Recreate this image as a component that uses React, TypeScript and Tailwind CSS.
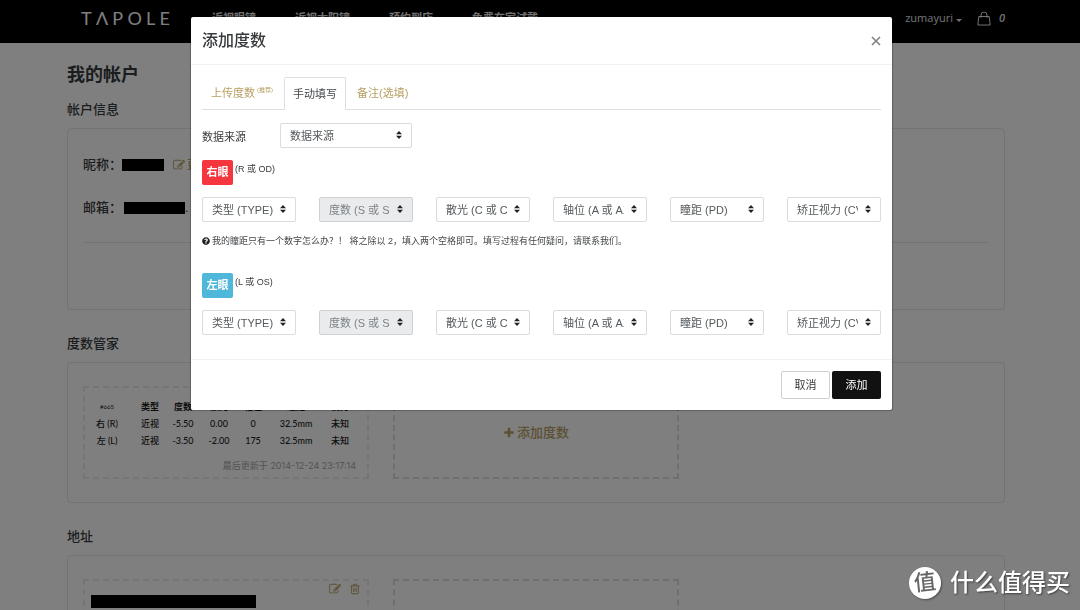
import { useState } from "react";
import type { ReactNode } from "react";
import { FaQuestionCircle } from "react-icons/fa";

const NAV_LINKS = ["近视眼镜", "近视太阳镜", "预约到店", "免费在家试戴"];

const FIELDS = [
  { name: "type", label: "类型 (TYPE)" },
  { name: "sph", label: "度数 (S 或 SPH)", disabled: true },
  { name: "cyl", label: "散光 (C 或 CYL)" },
  { name: "axis", label: "轴位 (A 或 AXIS)" },
  { name: "pd", label: "瞳距 (PD)" },
  { name: "cva", label: "矫正视力 (CVA)" },
];

const RX_HEAD = ["类型", "度数", "散光", "轴位", "瞳距", "视力"];

const RX_ROWS = [
  { eye: "右 (R)", values: ["近视", "-5.50", "0.00", "0", "32.5mm", "未知"] },
  { eye: "左 (L)", values: ["近视", "-3.50", "-2.00", "175", "32.5mm", "未知"] },
];

function EditIcon() {
  return (
    <svg viewBox="0 0 1792 1792" fill="currentColor" className="size-3" aria-hidden="true">
      <path d="M888 1184l116-116-152-152-116 116v56h96v96h56zm440-720q-16-16-33 1l-350 350q-17 17-1 33t33-1l350-350q17-17 1-33zm80 594v190q0 119-84.5 203.5t-203.5 84.5h-832q-119 0-203.5-84.5t-84.5-203.5v-832q0-119 84.5-203.5t203.5-84.5h832q63 0 117 25 15 7 18 23 3 17-9 29l-49 49q-14 14-32 8-23-6-45-6h-832q-66 0-113 47t-47 113v832q0 66 47 113t113 47h832q66 0 113-47t47-113v-126q0-13 9-22l64-64q15-15 35-7t20 29zm-96-738l288 288-672 672h-288v-288zm444 132l-92 92-288-288 92-92q28-28 68-28t68 28l152 152q28 28 28 68t-28 68z" />
    </svg>
  );
}

function TrashIcon() {
  return (
    <svg viewBox="0 0 1792 1792" fill="currentColor" className="size-3" aria-hidden="true">
      <path d="M704 736v576q0 14-9 23t-23 9h-64q-14 0-23-9t-9-23v-576q0-14 9-23t23-9h64q14 0 23 9t9 23zm256 0v576q0 14-9 23t-23 9h-64q-14 0-23-9t-9-23v-576q0-14 9-23t23-9h64q14 0 23 9t9 23zm256 0v576q0 14-9 23t-23 9h-64q-14 0-23-9t-9-23v-576q0-14 9-23t23-9h64q14 0 23 9t9 23zm128 724v-948h-896v948q0 22 7 40.5t14.5 27 10.5 8.5h832q3 0 10.5-8.5t14.5-27 7-40.5zm-672-1076h448l-48-117q-7-9-17-11h-317q-10 2-17 11zm928 32v64q0 14-9 23t-23 9h-96v948q0 83-47 143.5t-113 60.5h-832q-66 0-113-58.5t-47-141.5v-952h-96q-14 0-23-9t-9-23v-64q0-14 9-23t23-9h309l70-167q15-37 54-63t79-26h320q40 0 79 26t54 63l70 167h309q14 0 23 9t9 23z" />
    </svg>
  );
}

function PlusIcon() {
  return (
    <svg viewBox="0 0 1792 1792" fill="currentColor" className="size-3" aria-hidden="true">
      <path d="M1600 736v192q0 40-28 68t-68 28h-416v416q0 40-28 68t-68 28h-192q-40 0-68-28t-28-68v-416h-416q-40 0-68-28t-28-68v-192q0-40 28-68t68-28h416v-416q0-40 28-68t68-28h192q40 0 68 28t28 68v416h416q40 0 68 28t28 68z" />
    </svg>
  );
}

function SiteHeader() {
  return (
    <header className="flex h-[43px] items-start bg-black pl-[81px] pr-[75px] text-[11px] text-[#e4e4e4]">
      <a
        href="#home"
        aria-label="TAPOLE"
        className="mr-[42px] mt-[6px] flex w-[89px] justify-between font-['Lato',sans-serif] text-lg leading-6 text-white"
      >
        <span>T</span>
        <span>Λ</span>
        <span>P</span>
        <span>O</span>
        <span>L</span>
        <span>E</span>
      </a>
      <nav className="mt-2 flex gap-[39px] font-semibold leading-5">
        {NAV_LINKS.map((label) => (
          <a key={label} href="#shop" className="whitespace-nowrap">
            {label}
          </a>
        ))}
      </nav>
      <div className="ml-auto mt-2 flex h-5 items-center">
        <button type="button" className="flex items-center gap-[3px] font-['Open_Sans',sans-serif]">
          zumayuri
          <svg viewBox="0 0 6 3" className="mt-1 h-[3px] w-[6px]" fill="currentColor" aria-hidden="true">
            <path d="M0 0h6L3 3z" />
          </svg>
        </button>
        <a href="#cart" className="ml-[15px] flex items-center gap-2">
          <svg
            viewBox="0 0 14 15"
            className="h-[15px] w-[14px]"
            fill="none"
            stroke="currentColor"
            aria-hidden="true"
          >
            <path d="M1.8 5.5h10.4l1 8.5H.8z" strokeLinejoin="round" />
            <path d="M4 7V4a3 3 0 0 1 6 0v3" />
          </svg>
          <span className="font-['Open_Sans',sans-serif] text-[11px] font-semibold italic">0</span>
        </a>
      </div>
    </header>
  );
}

function Section({ title, children }: { title: string; children: ReactNode }) {
  return (
    <section className="mb-6">
      <h2 className="mb-2 text-[13px] font-medium leading-5">{title}</h2>
      <div className="rounded-sm border border-[#e6e6e6] px-[15px]">{children}</div>
    </section>
  );
}

function Prescription() {
  return (
    <div className="border-2 border-dashed border-[#ebebeb] pt-[10px]">
      <table className="w-[266px] table-fixed text-center font-['Lato','Noto_Sans_CJK_SC',sans-serif] text-[9px] text-[#1c1c1c]">
        <colgroup>
          <col className="w-[44px]" />
          <col className="w-[42px]" />
          <col className="w-[24px]" />
          <col className="w-[48px]" />
          <col className="w-[20px]" />
          <col className="w-[66px]" />
          <col className="w-[22px]" />
        </colgroup>
        <thead>
          <tr className="h-[17px] whitespace-nowrap leading-4">
            <th className="text-[6px] font-normal">#665</th>
            {RX_HEAD.map((h) => (
              <th key={h} className="font-bold">
                {h}
              </th>
            ))}
          </tr>
        </thead>
        <tbody>
          {RX_ROWS.map((row) => (
            <tr key={row.eye} className="h-[17px] whitespace-nowrap font-medium leading-4">
              <td>{row.eye}</td>
              {row.values.map((v, i) => (
                <td key={i}>{v}</td>
              ))}
            </tr>
          ))}
        </tbody>
      </table>
      <p className="mb-[3px] mt-[9px] pr-[11px] text-right font-['Inter','Noto_Sans_CJK_SC',sans-serif] text-[9px] leading-4 text-[#a6a6a6]">
        最后更新于 2014-12-24 23:17:14
      </p>
    </div>
  );
}

function AccountPage() {
  return (
    <main className="pl-[67px] pr-[75px] pt-5 text-[#373a3c]">
      <h1 className="mb-[13px] text-lg font-bold leading-6">我的帐户</h1>

      <Section title="帐户信息">
        <div className="flex flex-col gap-[23px] border-b border-[#e6e6e6] pb-6 pt-[26px] text-[13px] leading-5">
          <div className="flex items-center font-medium">
            昵称：
            <span className="h-3 w-[42px] bg-black" />
            <a href="#edit" className="ml-[9px] flex items-center gap-[2px] text-[11px] text-[#b8a064]">
              <EditIcon />
              更改
            </a>
          </div>
          <div className="flex items-center font-medium">
            邮箱：
            <span className="ml-[2px] h-3 w-[61px] bg-black" />
            .
          </div>
        </div>
        <div className="h-[66px]" />
      </Section>

      <Section title="度数管家">
        <div className="grid grid-cols-3 gap-6 py-[23px]">
          <Prescription />
          <button
            type="button"
            className="flex items-center justify-center gap-[2px] border-2 border-dashed border-[#dedede] text-[13px] font-medium text-[#b8a064]"
          >
            <PlusIcon />
            添加度数
          </button>
        </div>
      </Section>

      <Section title="地址">
        <div className="grid grid-cols-3 gap-6 py-[23px]">
          <div className="h-40 border-2 border-dashed border-[#ebebeb] px-[6px] pt-[2px]">
            <div className="flex h-3 justify-end gap-2 text-[#b8a064]">
              <button type="button" aria-label="编辑地址">
                <EditIcon />
              </button>
              <button type="button" aria-label="删除地址">
                <TrashIcon />
              </button>
            </div>
            <div className="h-[13px] w-[165px] bg-black" />
          </div>
          <button
            type="button"
            aria-label="添加地址"
            className="flex items-center justify-center border-2 border-dashed border-[#dedede] text-[#b8a064]"
          >
            <PlusIcon />
          </button>
        </div>
      </Section>
    </main>
  );
}

type SelectBoxProps = { id: string; label: string; disabled?: boolean; ariaLabel?: string };

function SelectBox({ id, label, disabled, ariaLabel }: SelectBoxProps) {
  return (
    <div className="relative">
      <select
        id={id}
        aria-label={ariaLabel}
        disabled={disabled}
        className="block h-[25px] w-full appearance-none rounded-xs border border-[#d9dbdd] bg-white pl-[9px] pr-[22px] pt-[2px] text-[11px] text-[#55595c] disabled:border-[#cfd2d4] disabled:bg-[#e9ebec] disabled:text-[#7c8287] disabled:opacity-100"
      >
        <option>{label}</option>
      </select>
      <svg
        viewBox="0 0 6 8"
        className="pointer-events-none absolute right-[10px] top-2 h-2 w-[6px]"
        fill="#222"
        aria-hidden="true"
      >
        <path d="M0 3.3L3 0l3 3.3zM0 4.7h6L3 8z" />
      </svg>
    </div>
  );
}

function EyeFields({ id, name }: { id: string; name: string }) {
  return (
    <div className="mt-3 grid grid-cols-6 gap-[23px]">
      {FIELDS.map((f) => (
        <SelectBox
          key={f.name}
          id={`${id}-${f.name}`}
          label={f.label}
          disabled={f.disabled}
          ariaLabel={`${name} ${f.label}`}
        />
      ))}
    </div>
  );
}

function Tab({ active, onClick, children }: { active: boolean; onClick: () => void; children: ReactNode }) {
  return (
    <button
      type="button"
      role="tab"
      aria-selected={active}
      onClick={onClick}
      className={
        active
          ? "-mb-px flex h-[33px] items-center rounded-t-xs border border-b-0 border-[#dfdfdf] bg-white px-2 text-[#43474a]"
          : "flex h-8 items-center px-[9px] text-[#b8a064]"
      }
    >
      {children}
    </button>
  );
}

function AddPrescriptionModal() {
  const [tab, setTab] = useState("manual");

  return (
    <div className="fixed inset-0 bg-black/50 pl-[3px]">
      <div
        role="dialog"
        aria-labelledby="modal-title"
        className="mx-auto mt-[17px] max-w-[701px] rounded-xs bg-white text-[11px] text-[#373a3c] shadow-[0_0_1px_1px_rgba(0,0,0,0.25)]"
      >
        <div className="flex h-12 items-center justify-between border-b border-[#f1f1f1] px-[11px]">
          <h2 id="modal-title" className="text-base font-medium leading-6">
            添加度数
          </h2>
          <button type="button" aria-label="关闭" className="text-[#808080]">
            <svg viewBox="0 0 10 10" className="size-[10px]" stroke="currentColor" strokeWidth="1.6" aria-hidden="true">
              <path d="M1 1l8 8M9 1L1 9" />
            </svg>
          </button>
        </div>

        <div className="px-[11px] pb-6 pt-3">
          <div role="tablist" className="flex gap-[2px] border-b border-[#dfdfdf]">
            <Tab active={tab === "upload"} onClick={() => setTab("upload")}>
              上传度数
              <sup className="ml-[2px] text-[6px]">(推荐)</sup>
            </Tab>
            <Tab active={tab === "manual"} onClick={() => setTab("manual")}>
              手动填写
            </Tab>
            <Tab active={tab === "note"} onClick={() => setTab("note")}>
              备注(选填)
            </Tab>
          </div>

          <div className="mt-[13px] flex items-end">
            <label htmlFor="source" className="w-[78px] leading-[22px]">
              数据来源
            </label>
            <div className="w-[132px]">
              <SelectBox id="source" label="数据来源" />
            </div>
          </div>

          <div className="mt-3 flex items-start gap-[2px]">
            <span className="flex h-[25px] w-[31px] items-center justify-center rounded-xs bg-[#f5363e] text-[11px] font-bold text-white">
              右眼
            </span>
            <span className="text-[9px] leading-[18px]">(R 或 OD)</span>
          </div>
          <EyeFields id="right" name="右眼" />

          <p className="mt-[11px] flex items-center gap-[2px] whitespace-nowrap text-[9px] leading-4 text-[#43474a]">
            <FaQuestionCircle className="size-2 text-[#222]" />
            我的瞳距只有一个数字怎么办？！ 将之除以 2，填入两个空格即可。填写过程有任何疑问，请联系我们。
          </p>

          <div className="mt-6 flex items-start gap-[2px]">
            <span className="flex h-[25px] w-[31px] items-center justify-center rounded-xs bg-[#4fb7d9] text-[11px] font-bold text-white">
              左眼
            </span>
            <span className="text-[9px] leading-[18px]">(L 或 OS)</span>
          </div>
          <EyeFields id="left" name="左眼" />
        </div>

        <div className="flex justify-end gap-[2px] border-t border-[#f1f1f1] p-[11px]">
          <button type="button" className="h-7 w-[49px] rounded-xs border border-[#cfcfcf] bg-white">
            取消
          </button>
          <button type="button" className="h-7 w-[49px] rounded-xs bg-[#111] text-white">
            添加
          </button>
        </div>
      </div>
    </div>
  );
}

function Watermark() {
  return (
    <div className="pointer-events-none fixed bottom-[11px] right-[10px] flex items-center gap-[9px]">
      <div className="flex size-8 items-center justify-center rounded-full bg-white shadow-[1px_1px_2px_rgba(0,0,0,0.4)]">
        <span className="-rotate-6 text-[22px] font-medium leading-8 text-[#666]">值</span>
      </div>
      <span className="text-2xl font-medium leading-8 text-white [text-shadow:1px_1px_2px_rgba(0,0,0,0.5)]">
        什么值得买
      </span>
    </div>
  );
}

export default function App() {
  return (
    <div className="h-screen overflow-hidden bg-white font-['Liberation_Sans','Noto_Sans_CJK_SC',sans-serif]">
      <SiteHeader />
      <AccountPage />
      <AddPrescriptionModal />
      <Watermark />
    </div>
  );
}
